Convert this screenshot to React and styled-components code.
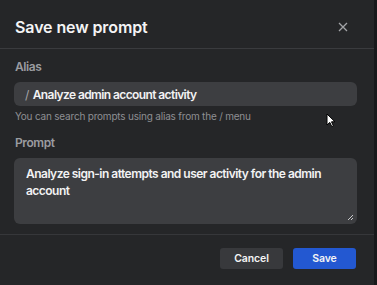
import React from "react";
import styled, { createGlobalStyle } from "styled-components";

const Global = createGlobalStyle`
  html, body { margin: 0; padding: 0; background: #1b1c1e; }
  body { font-family: Inter, "Noto Sans", sans-serif; -webkit-font-smoothing: antialiased; }
  * { box-sizing: border-box; }
`;

const Page = styled.div`
  display: flex;
  width: 377px;
  height: 285px;
  background: #1b1c1e;
  position: relative;
  overflow: hidden;
`;

const Dialog = styled.div`
  width: 374px;
  height: 285px;
  background: #252628;
  display: flex;
  flex-direction: column;
`;

const Header = styled.div`
  height: 49px;
  display: flex;
  align-items: center;
  justify-content: space-between;
  padding: 5px 26px 0 15px;
  border-bottom: 1px solid #3a3b3e;
`;

const Title = styled.h1`
  margin: 0;
  font-size: 16px;
  font-weight: 600;
  color: #f4f4f5;
  letter-spacing: -0.1px;
`;

const Close = styled.button`
  background: none;
  border: none;
  padding: 0;
  display: flex;
  color: #a3a4a7;
`;

const Body = styled.div`
  padding: 10px 17px 0 14px;
  display: flex;
  flex-direction: column;
`;

const Label = styled.div`
  font-size: 12px;
  line-height: 16px;
  font-weight: 600;
  color: #9b9ca0;
  letter-spacing: -0.4px;
  padding-left: 1px;
  margin-top: ${(p) => p.$top || 0}px;
  margin-bottom: 7px;
`;

const InputBox = styled.div`
  height: 24px;
  border-radius: 6px;
  background: #3d3e41;
  display: flex;
  align-items: center;
  padding-left: 11px;
  font-size: 12px;
  font-weight: 600;
  letter-spacing: -0.6px;
  color: #f2f2f3;
`;

const Slash = styled.span`
  color: #a5a6a9;
  font-weight: 400;
  margin-right: 4px;
`;

const Helper = styled.div`
  font-size: 10px;
  line-height: 14px;
  letter-spacing: -0.2px;
  color: #8e8f93;
  margin-top: 3px;
  padding-left: 1px;
`;

const TextArea = styled.div`
  height: 66px;
  border-radius: 6px;
  background: #3d3e41;
  padding: 7px 12px;
  font-size: 12px;
  font-weight: 600;
  letter-spacing: -0.52px;
  line-height: 17px;
  color: #f2f2f3;
  position: relative;
`;

const Grip = styled.svg`
  position: absolute;
  right: 3px;
  bottom: 3px;
`;

const Footer = styled.div`
  margin-top: 10px;
  border-top: 1px solid #36373a;
  display: flex;
  justify-content: flex-end;
  gap: 10px;
  padding: 13px 18px 0 0;
`;

const Button = styled.button`
  width: 63px;
  height: 21px;
  border: none;
  border-radius: 3px;
  font-family: inherit;
  font-size: 10.5px;
  font-weight: 600;
  letter-spacing: -0.1px;
  color: #f4f4f5;
  background: ${(p) => (p.$primary ? "#2358d1" : "#38393c")};
  padding: 0;
`;

const Strip = styled.div`
  flex: 1;
  background: #18191b;
`;

const Pointer = styled.svg`
  position: absolute;
  left: 326px;
  top: 113px;
`;

export default function App() {
  return (
    <Page>
      <Global />
      <Dialog>
        <Header>
          <Title>Save new prompt</Title>
          <Close aria-label="Close">
            <svg width="10" height="10" viewBox="0 0 10 10">
              <path d="M1 1L9 9M9 1L1 9" stroke="currentColor" strokeWidth="1.3" />
            </svg>
          </Close>
        </Header>
        <Body>
          <Label>Alias</Label>
          <InputBox>
            <Slash>/</Slash>Analyze admin account activity
          </InputBox>
          <Helper>You can search prompts using alias from the / menu</Helper>
          <Label $top={12}>Prompt</Label>
          <TextArea>
            Analyze sign-in attempts and user activity for the admin account
            <Grip width="7" height="7" viewBox="0 0 7 7">
              <path d="M6 1L1 6M6 4L4 6" stroke="#c9cacc" strokeWidth="1" />
            </Grip>
          </TextArea>
        </Body>
        <Footer>
          <Button>Cancel</Button>
          <Button $primary>Save</Button>
        </Footer>
      </Dialog>
      <Strip />
      <Pointer width="10" height="15" viewBox="0 0 10 15">
        <path d="M1 1L1 12L3.8 9.4L5.8 13.6L7.4 12.9L5.5 8.8L9 8.8Z" fill="#fff" stroke="#000" strokeWidth="1" />
      </Pointer>
    </Page>
  );
}
